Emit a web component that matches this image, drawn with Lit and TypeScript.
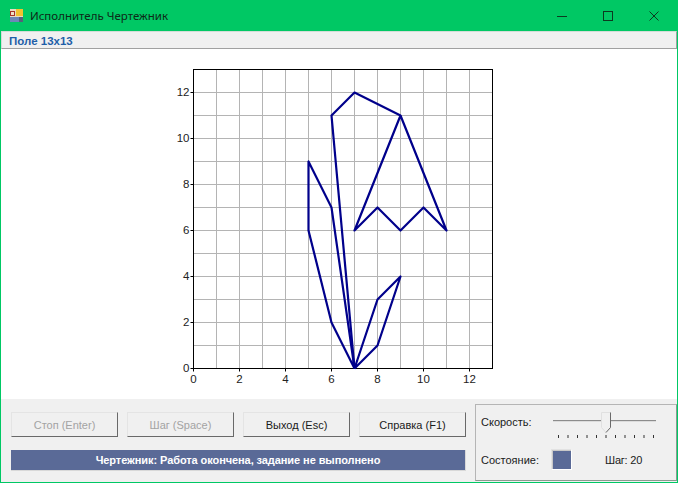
import { LitElement, html, css, svg } from "lit";
import { customElement } from "lit/decorators.js";

const UNIT = 23;

// plot origin, relative to the plot area
const px = (x: number) => 192.5 + x * UNIT;
const py = (y: number) => 319.5 - y * UNIT;

const PATHS: number[][][] = [
  [[7, 0], [6, 7], [5, 9], [5, 6], [6, 2], [7, 0]],
  [[7, 0], [6, 11], [7, 12], [9, 11], [7, 6], [8, 7], [9, 6], [10, 7], [11, 6], [9, 11]],
  [[7, 0], [8, 3], [9, 4], [8, 1], [7, 0]],
];

const TICKS = [0, 1, 2, 3, 4, 5, 6, 7, 8, 9, 10, 11, 12];

@customElement("app-root")
export class AppRoot extends LitElement {
  static styles = css`
    :host {
      display: flex;
      flex-direction: column;
      width: 678px;
      height: 483px;
      box-sizing: border-box;
      border: 1px solid #00c864;
      border-top: none;
      background: #fff;
      font-family: "Liberation Sans", Arial, sans-serif;
      font-size: 11px;
      color: #1a1a1a;
      overflow: hidden;
    }

    .titlebar {
      display: flex;
      align-items: center;
      height: 31px;
      margin: 0 -1px;
      flex: none;
      background: #00c864;
      color: #0d2a18;
      font-family: "Noto Sans", "Open Sans", sans-serif;
      font-size: 11.5px;
    }

    .app-icon {
      margin: 0 5px 0 10px;
    }

    .title {
      flex: 1;
      padding-left: 2px;
    }

    .win-btn {
      display: flex;
      align-items: center;
      justify-content: center;
      width: 46px;
      height: 30px;
    }

    .win-btn:last-child {
      margin-right: 1px;
    }

    .menu {
      flex: none;
      box-sizing: border-box;
      height: 18px;
      padding-left: 7px;
      line-height: 18px;
      font-size: 11.5px;
      background: #f0f0f0;
      border: 1px solid #d4ddd8;
      border-bottom-color: #a0a0a0;
      border-right-color: #a0a0a0;
      color: #1f5fa8;
      font-weight: bold;
    }

    .plot {
      flex: 1;
      min-height: 0;
      background: #fff;
    }

    .plot svg {
      display: block;
    }

    .plot text {
      font-family: "Liberation Sans", Arial, sans-serif;
      font-size: 11.5px;
      fill: #222;
    }

    .bottom {
      flex: none;
      display: flex;
      height: 83px;
      background: #f0f0f0;
    }

    .left {
      flex: none;
      width: 465px;
      box-sizing: border-box;
      padding: 13px 0 0 10px;
    }

    .buttons {
      display: flex;
      gap: 9px;
    }

    button {
      width: 107px;
      height: 25px;
      padding: 0;
      box-sizing: border-box;
      font: inherit;
      color: #1a1a1a;
      background: #f0f0f0;
      border: 1px solid;
      border-color: #e4e4e4 #696969 #696969 #e4e4e4;
    }

    button:disabled {
      color: #a3a3a3;
    }

    .status {
      height: 21px;
      margin-top: 13px;
      width: 455px;
      box-sizing: border-box;
      line-height: 20px;
      text-align: center;
      font-weight: bold;
      letter-spacing: -0.08px;
      color: #fff;
      background: #5a6a97;
      border-right: 1px solid #d8d8d8;
      border-bottom: 1px solid #d8d8d8;
    }

    .side {
      flex: 1;
      margin: 5px 0 1px 9px;
      padding: 0 0 0 5px;
      border: 1px solid #b5b5b5;
      border-right-color: #8a9a90;
      border-bottom-color: #8a9a90;
      display: grid;
      grid-template-columns: 70px 1fr;
      grid-template-rows: 34px 1fr;
    }

    .label {
      align-self: center;
    }

    .state-row {
      display: flex;
      align-items: center;
    }

    .swatch {
      width: 21px;
      height: 21px;
      box-sizing: border-box;
      background: #5a6a97;
      border: 1px solid #e2e2e2;
      border-right-color: #fff;
      border-bottom-color: #fff;
      box-shadow: inset 1px 1px 0 #c8c8c8;
    }

    .step {
      margin-left: 33px;
      letter-spacing: -0.2px;
    }
  `;

  private renderPlot() {
    const left = px(0);
    const right = px(13);
    const top = py(13);
    const bottom = py(0);
    return html`
      <svg width="676" height="350" viewBox="0 0 676 350">
        ${TICKS.slice(1).map(
          (t) => svg`
            <line x1=${px(t)} x2=${px(t)} y1=${top} y2=${bottom} stroke="#b4b4b4" />
            <line x1=${left} x2=${right} y1=${py(t)} y2=${py(t)} stroke="#b4b4b4" />
          `
        )}
        <rect
          x=${left}
          y=${top}
          width=${right - left}
          height=${bottom - top}
          fill="none"
          stroke="#000"
        />
        ${TICKS.filter((t) => t % 2 === 0).map(
          (t) => svg`
            <line x1=${px(t)} x2=${px(t)} y1=${bottom} y2=${bottom + 3} stroke="#000" />
            <line x1=${left - 3} x2=${left} y1=${py(t)} y2=${py(t)} stroke="#000" />
            <text x=${px(t)} y=${bottom + 14} text-anchor="middle">${t}</text>
            <text x=${left - 4} y=${py(t) + 3} text-anchor="end">${t}</text>
          `
        )}
        ${PATHS.map(
          (p) => svg`
            <polyline
              points=${p.map(([x, y]) => `${px(x)},${py(y)}`).join(" ")}
              fill="none"
              stroke="#00008b"
              stroke-width="2.2"
              stroke-linejoin="round"
            />
          `
        )}
      </svg>
    `;
  }

  private renderSlider() {
    const ticks = Array.from({ length: 11 }, (_, i) => 7.5 + i * 9.5);
    return html`
      <svg width="112" height="34" viewBox="0 0 112 34">
        <line x1="2" x2="105" y1="15.5" y2="15.5" stroke="#8c8c8c" />
        <line x1="2" x2="105" y1="16.5" y2="16.5" stroke="#dcdcdc" />
        <path d="M50.5 7.5h9v15l-4.5 5-4.5-5z" fill="#f0f0f0" stroke="#e0e0e0" />
        <path d="M59.5 7.5v15l-4.5 5" fill="none" stroke="#6a6a6a" />
        ${ticks.map(
          (x) => svg`<line x1=${x} x2=${x} y1="30" y2="33" stroke="#333" />`
        )}
      </svg>
    `;
  }

  render() {
    return html`
      <div class="titlebar">
        <svg class="app-icon" width="13" height="13" viewBox="0 0 13 13">
          <rect x="0" y="0" width="13" height="13" fill="#e6dcc4" />
          <rect x="6" y="0" width="7" height="7" fill="#f2c230" />
          <rect x="0.5" y="2.5" width="4" height="4" fill="#f0e2c8" stroke="#a8322a" />
          <rect x="0" y="8" width="9" height="5" fill="#6d86b8" />
          <rect x="9" y="8" width="4" height="5" fill="#56607a" />
        </svg>
        <span class="title">Исполнитель Чертежник</span>
        <div class="win-btn">
          <svg width="10" height="10" viewBox="0 0 10 10">
            <line x1="0" x2="10" y1="5.5" y2="5.5" stroke="#0d3a20" />
          </svg>
        </div>
        <div class="win-btn">
          <svg width="10" height="10" viewBox="0 0 10 10">
            <rect x="0.5" y="0.5" width="9" height="9" fill="none" stroke="#0d3a20" />
          </svg>
        </div>
        <div class="win-btn">
          <svg width="10" height="10" viewBox="0 0 10 10">
            <path d="M0.5 0.5l9 9M9.5 0.5l-9 9" stroke="#0d3a20" fill="none" />
          </svg>
        </div>
      </div>
      <div class="menu">Поле 13х13</div>
      <div class="plot">${this.renderPlot()}</div>
      <div class="bottom">
        <div class="left">
          <div class="buttons">
            <button disabled>Стоп (Enter)</button>
            <button disabled>Шаг (Space)</button>
            <button>Выход (Esc)</button>
            <button>Справка (F1)</button>
          </div>
          <div class="status">Чертежник: Работа окончена, задание не выполнено</div>
        </div>
        <div class="side">
          <span class="label">Скорость:</span>
          <div>${this.renderSlider()}</div>
          <span class="label">Состояние:</span>
          <div class="state-row">
            <div class="swatch"></div>
            <span class="step">Шаг: 20</span>
          </div>
        </div>
      </div>
    `;
  }
}
